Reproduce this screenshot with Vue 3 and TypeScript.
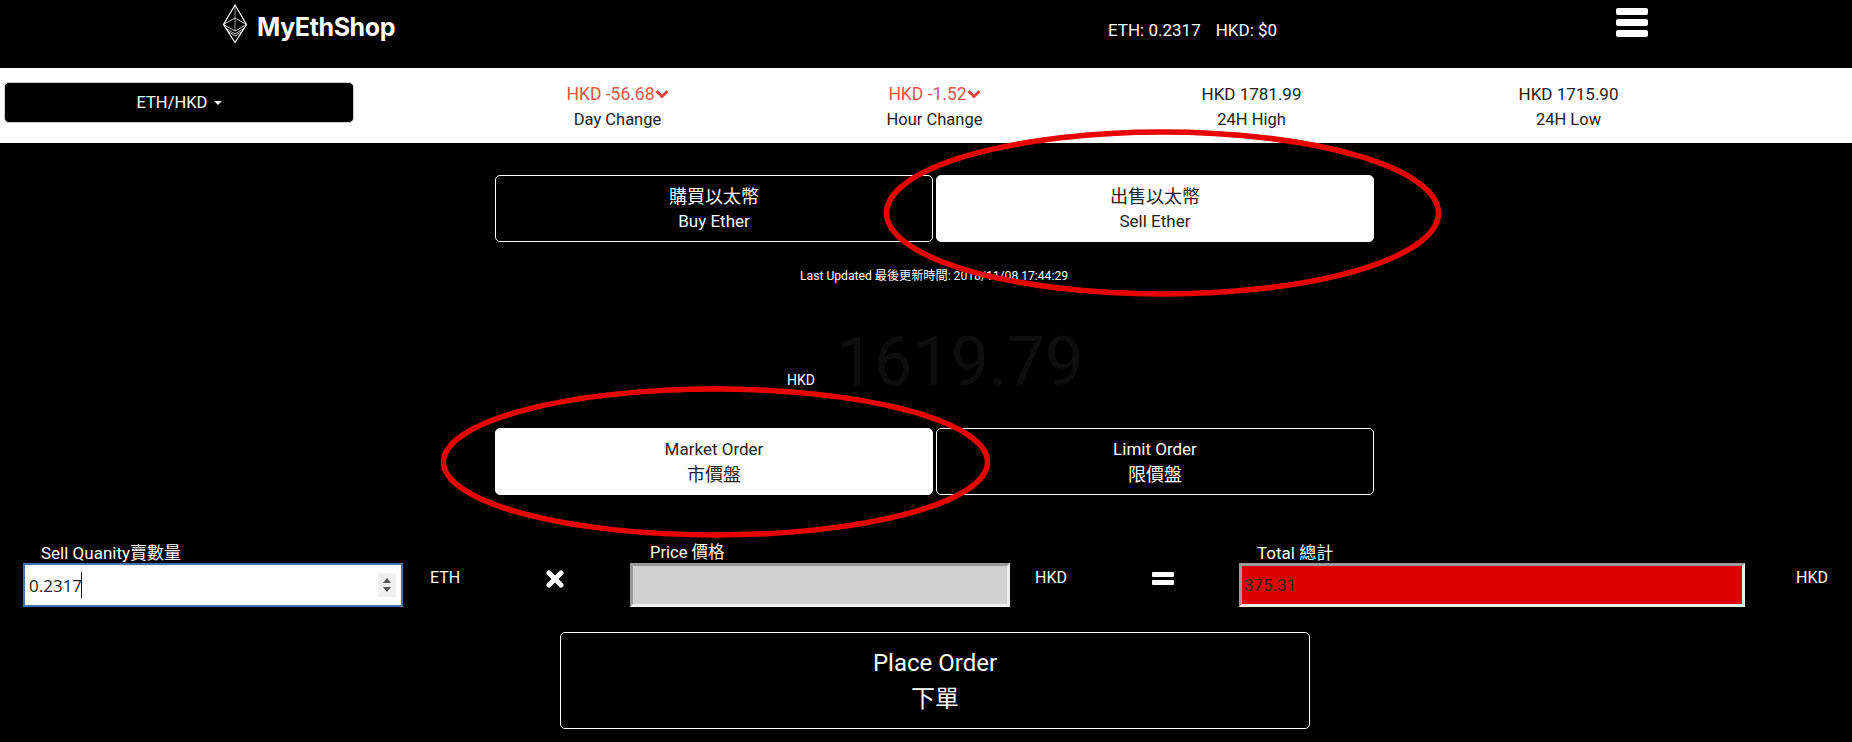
<script setup lang="ts">
import { onMounted, ref } from 'vue'

interface Stat {
  value: string
  label: string
  down?: boolean
}

const stats: Stat[] = [
  { value: 'HKD -56.68', label: 'Day Change', down: true },
  { value: 'HKD -1.52', label: 'Hour Change', down: true },
  { value: 'HKD 1781.99', label: '24H High' },
  { value: 'HKD 1715.90', label: '24H Low' },
]

const qty = ref<HTMLInputElement | null>(null)

onMounted(() => {
  qty.value?.focus()
})
</script>

<template>
  <div class="page">
    <header class="topbar">
      <div class="brand">
        <svg class="eth" width="26" height="40" viewBox="0 0 26 40" fill="none" stroke="#fff">
          <path d="M13 1 L24.5 20.5 L13 38.5 L1.5 20.5 Z" stroke-width="1.2" />
          <path d="M1.5 20.5 L13 14 L24.5 20.5 L13 27 Z" stroke-width="0.8" />
          <path d="M13 1 V27" stroke-width="0.6" />
          <path d="M4 24.5 L13 30 L22 24.5 M6 27.5 L13 32 L20 27.5" stroke-width="0.8" />
        </svg>
        <span class="brand-name">MyEthShop</span>
      </div>
      <div class="balance"><span>ETH: 0.2317</span><span>HKD: $0</span></div>
      <div class="burger"><span /><span /><span /></div>
    </header>

    <section class="ticker">
      <div class="pair-cell">
        <button class="pair">ETH/HKD <i class="caret" /></button>
      </div>
      <div v-for="s in stats" :key="s.label" class="stat">
        <div class="stat-value" :class="{ down: s.down }">
          {{ s.value }}<svg v-if="s.down" class="chev" width="14" height="10" viewBox="0 0 14 10" fill="none" stroke="#e0463a" stroke-width="3"><path d="M1.5 2 L7 7.5 L12.5 2" /></svg>
        </div>
        <div>{{ s.label }}</div>
      </div>
    </section>

    <div class="toggle first">
      <button class="tbtn"><span class="zh">購買以太幣</span><span>Buy Ether</span></button>
      <button class="tbtn on"><span class="zh">出售以太幣</span><span>Sell Ether</span></button>
    </div>

    <p class="updated">Last Updated 最後更新時間: 2018/11/08 17:44:29</p>

    <div class="quote">
      <span class="quote-unit">HKD</span>
      <span class="quote-num">1619.79</span>
    </div>

    <div class="toggle">
      <button class="tbtn on"><span>Market Order</span><span class="zh">市價盤</span></button>
      <button class="tbtn"><span>Limit Order</span><span class="zh">限價盤</span></button>
    </div>

    <div class="order-row">
      <div class="field">
        <label>Sell Quanity賣數量</label>
        <div class="qty-wrap">
          <input ref="qty" class="inp qty" type="number" value="0.2317" />
          <i class="cursor" />
          <svg class="spin" width="18" height="24" viewBox="0 0 18 24" fill="#555"><path d="M9 5 L13 10 H5 Z M5 14 H13 L9 19 Z" /></svg>
        </div>
      </div>
      <div class="unit">ETH</div>
      <div class="op">
        <svg width="18" height="18" viewBox="0 0 18 18" stroke="#fff" stroke-width="5" stroke-linecap="round"><path d="M3 3 L15 15 M15 3 L3 15" /></svg>
      </div>
      <div class="field price-field">
        <label>Price 價格</label>
        <input class="inp price" type="text" disabled />
      </div>
      <div class="unit hkd">HKD</div>
      <div class="op">
        <div class="equals"><span /><span /></div>
      </div>
      <div class="field">
        <label>Total 總計</label>
        <input class="inp total" type="text" value="375.31" readonly />
      </div>
      <div class="unit last">HKD</div>
    </div>

    <button class="place"><span>Place Order</span><span>下單</span></button>

    <svg class="marks" width="1852" height="742" viewBox="0 0 1852 742" fill="none" stroke="#eb0000" stroke-width="5.5">
      <ellipse cx="1162.5" cy="213" rx="276" ry="81" />
      <ellipse cx="715.5" cy="462" rx="272" ry="73" />
    </svg>
  </div>
</template>

<style scoped>
.page {
  position: relative;
  width: 1852px;
  height: 742px;
  overflow: hidden;
  background: #000;
  color: #fff;
  font-family: Roboto, "Noto Sans CJK TC", sans-serif;
  font-size: 16px;
  line-height: 24px;
}

.topbar {
  display: grid;
  grid-template-columns: 1108px 508px auto;
  height: 68px;
}

.brand {
  display: flex;
  align-items: flex-start;
  gap: 9px;
  padding: 4px 0 0 222px;
}

.brand-name {
  margin-top: 8px;
  font-family: Inter, sans-serif;
  font-size: 25px;
  font-weight: 700;
  letter-spacing: -0.4px;
  line-height: 30px;
}

.balance {
  display: flex;
  gap: 15px;
  padding-top: 18px;
  font-size: 17px;
}

.burger {
  display: flex;
  flex-direction: column;
  gap: 4px;
  width: 32px;
  padding-top: 8px;
}

.burger span {
  height: 7px;
  border-radius: 2px;
  background: #fff;
}

.ticker {
  display: grid;
  grid-template-columns: 459px repeat(4, 317px);
  height: 75px;
  background: #fff;
  color: #222;
}

.pair-cell {
  padding: 14px 0 0 4px;
}

.pair {
  width: 350px;
  height: 41px;
  border: 1px solid #ccc;
  border-radius: 5px;
  background: #000;
  color: #fff;
  font: inherit;
  font-size: 16.5px;
}

.caret {
  display: inline-block;
  margin-left: 2px;
  border-top: 4px solid #fff;
  border-left: 4px solid transparent;
  border-right: 4px solid transparent;
  vertical-align: middle;
}

.stat {
  padding-top: 13px;
  font-size: 16.5px;
  line-height: 26px;
  text-align: center;
}

.stat-value {
  font-size: 17px;
}

.down {
  color: #e0574c;
  font-size: 17.5px;
}

.chev {
  vertical-align: 1px;
}

.toggle {
  display: flex;
  gap: 3px;
  margin-top: 32px;
  padding-left: 495px;
}

.tbtn {
  display: flex;
  flex-direction: column;
  align-items: center;
  justify-content: center;
  width: 438px;
  height: 67px;
  border: 1px solid #fff;
  border-radius: 5px;
  background: #000;
  color: #fff;
  font: inherit;
  font-size: 17px;
  line-height: 25px;
}

.tbtn .zh {
  font-size: 18px;
}

.tbtn.on {
  background: #fff;
  color: #222;
}

.updated {
  margin: 25px 0 0;
  padding-left: 800px;
  font-size: 12.15px;
  line-height: 18px;
}

.quote {
  display: flex;
  align-items: flex-start;
  margin-top: 43px;
  padding-left: 787px;
}

.quote-unit {
  margin-top: 42px;
  font-size: 14px;
  line-height: 20px;
}

.quote-num {
  margin-left: 21px;
  color: #0e0e0e;
  font-size: 68px;
  line-height: 68px;
}

.order-row {
  display: grid;
  grid-template-columns: 380px 143px 84px 380px 142px 87px 506px auto;
  margin-top: 48px;
  padding-left: 23px;
}

.field label {
  display: block;
  padding-left: 18px;
  font-size: 17px;
  line-height: 20px;
}

.price-field label {
  padding-left: 20px;
  font-size: 16.5px;
}

.qty-wrap {
  position: relative;
}

.inp {
  display: block;
  box-sizing: border-box;
  width: 100%;
  height: 44px;
  padding: 1px 2px;
  border: 3px inset #eee;
  color: #222;
  font-family: "Open Sans", sans-serif;
  font-size: 17px;
  outline: none;
}

.qty {
  padding: 1px 4px;
  border: 2px solid #4a6fb0;
  background: #fff;
  caret-color: transparent;
}

.qty::-webkit-inner-spin-button {
  display: none;
}

.cursor {
  position: absolute;
  top: 9px;
  left: 58px;
  width: 1px;
  height: 26px;
  background: #111;
}

.spin {
  position: absolute;
  top: 10px;
  right: 7px;
  background: #f0f0f0;
}

.price {
  background: #d0d0d0;
}

.total {
  background: #dd0000;
  font-family: Roboto, sans-serif;
}

.unit {
  padding: 23px 0 0 27px;
}

.unit.hkd {
  padding-left: 25px;
}

.unit.last {
  padding-left: 51px;
}

.op {
  padding-top: 27px;
}

.equals {
  display: flex;
  flex-direction: column;
  gap: 3px;
  width: 22px;
  margin-top: 2px;
}

.equals span {
  height: 5px;
  border-radius: 1px;
  background: #fff;
}

.place {
  display: flex;
  flex-direction: column;
  align-items: center;
  justify-content: center;
  width: 750px;
  height: 97px;
  margin: 25px 0 0 560px;
  border: 1px solid #fff;
  border-radius: 5px;
  background: #000;
  color: #fff;
  font: inherit;
  font-size: 24px;
  line-height: 36px;
}

.marks {
  position: absolute;
  top: 0;
  left: 0;
  pointer-events: none;
}
</style>

<style>
body {
  background: #000;
}
</style>
